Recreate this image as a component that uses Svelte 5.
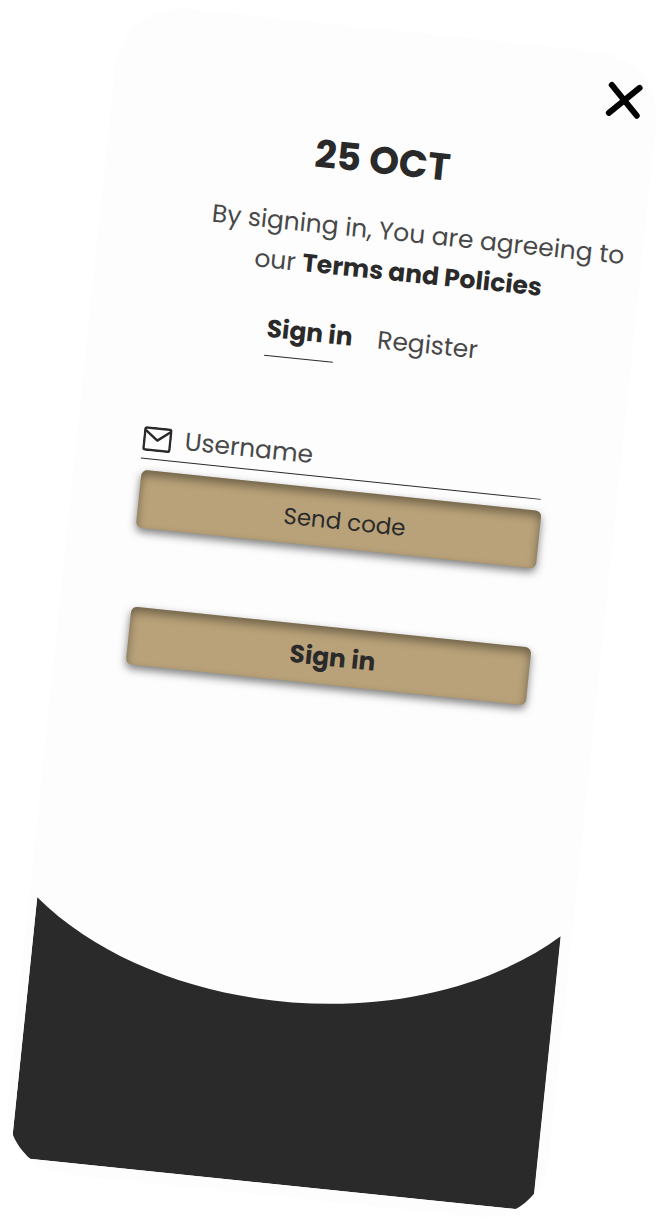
<script>
  let username = $state('');
  let mode = $state('signin');
</script>

<main class="page">
  <section class="card">
    <button class="close" type="button" aria-label="Close">
      <svg viewBox="0 0 36 36" aria-hidden="true">
        <path d="M4 4 32 32M32 4 4 32" />
      </svg>
    </button>

    <h1>25 OCT</h1>
    <p class="terms">
      <span>By signing in, You are agreeing to</span>
      <span class="second">our <a href="#terms">Terms and Policies</a></span>
    </p>

    <nav class="tabs">
      <button type="button" class:active={mode === 'signin'} onclick={() => (mode = 'signin')}>Sign in</button>
      <button type="button" class:active={mode === 'register'} onclick={() => (mode = 'register')}>Register</button>
    </nav>

    <form onsubmit={(e) => e.preventDefault()}>
      <div class="identity">
        <label class="field">
          <svg viewBox="0 0 30 26" aria-hidden="true">
            <rect x="1.5" y="1.5" width="27" height="23" rx="2" />
            <path d="M2 4 15 14 28 4" />
          </svg>
          <input type="text" aria-label="Username" placeholder="Username" bind:value={username} />
        </label>
        <button class="gold" type="button">Send code</button>
      </div>
      <div class="submit">
        <button class="gold strong" type="submit">Sign in</button>
      </div>
    </form>

    <footer>
      <svg viewBox="0 0 525 276" preserveAspectRatio="none" aria-hidden="true">
        <path d="M0 15C134 123 391 121 525 0V276H0Z" />
      </svg>
    </footer>
  </section>
</main>

<style>
  :global(body) {
    margin: 0;
    background: #fff;
  }

  .page {
    min-height: 100vh;
    display: flex;
    align-items: center;
    justify-content: center;
    overflow: hidden;
    font-family: Poppins, Inter, sans-serif;
    font-size: 25px;
    line-height: 40px;
    color: #2a2a2a;
  }

  .card {
    position: relative;
    box-sizing: border-box;
    width: 82%;
    padding: 107px 0 12px;
    border-radius: 66px;
    background: #fdfdfd;
    overflow: hidden;
    transform: rotate(5.9deg);
  }

  button,
  input {
    font: inherit;
    color: inherit;
    border: 0;
    padding: 0;
    background: none;
  }

  button {
    cursor: pointer;
  }

  .close {
    position: absolute;
    top: 28px;
    right: 16px;
    width: 36px;
    height: 36px;
  }

  .close svg {
    display: block;
    fill: none;
    stroke: #000;
    stroke-width: 6;
    stroke-linecap: round;
  }

  h1 {
    margin: 0 0 26px;
    padding-left: 8px;
    font-size: 38px;
    line-height: 48px;
    font-weight: 700;
    text-align: center;
  }

  .terms {
    margin: 0 0 29px;
    padding-left: 94px;
    text-align: center;
    white-space: nowrap;
    color: #484848;
  }

  .terms span {
    display: block;
  }

  .terms .second {
    padding-right: 32px;
  }

  .terms a {
    font-weight: 700;
    color: #2a2a2a;
    text-decoration: none;
  }

  .tabs {
    display: flex;
    gap: 25px;
    padding-left: 178px;
  }

  .tabs button {
    position: relative;
    padding-bottom: 7px;
    color: #484848;
  }

  .tabs .active {
    font-weight: 700;
    color: #2a2a2a;
  }

  .tabs .active::after {
    content: '';
    position: absolute;
    left: 0;
    bottom: 0;
    width: 80%;
    height: 1px;
    background: #2a2a2a;
  }

  form {
    display: flex;
    flex-direction: column;
    gap: 79px;
    margin-top: 74px;
  }

  .identity,
  .submit {
    display: flex;
    flex-direction: column;
    gap: 11px;
    width: 74%;
    margin-left: 68px;
  }

  .submit {
    margin-left: 72px;
  }

  .field {
    display: flex;
    align-items: center;
    gap: 13px;
    height: 40px;
    margin: 0 2px 0 -2px;
    border-bottom: 1px solid #2a2a2a;
  }

  .field svg {
    flex: none;
    width: 29px;
    height: 25px;
    fill: none;
    stroke: #2a2a2a;
    stroke-width: 2.5;
    stroke-linejoin: round;
  }

  .field input {
    flex: 1;
    min-width: 0;
    height: 40px;
    outline: 0;
  }

  .field input::placeholder {
    color: #484848;
    opacity: 1;
  }

  .gold {
    height: 58px;
    padding: 4px 0 0 12px;
    border-radius: 6px;
    background: #b9a279;
    font-size: 23px;
    box-shadow:
      0 4px 8px rgba(0, 0, 0, 0.5),
      inset 0 5px 10px rgba(0, 0, 0, 0.4);
  }

  .strong {
    padding-left: 8px;
    font-size: 25px;
    font-weight: 700;
  }

  footer {
    margin: 226px 11px 0 8px;
  }

  footer svg {
    display: block;
    width: 100%;
    height: 276px;
    fill: #2a2a2a;
  }
</style>
